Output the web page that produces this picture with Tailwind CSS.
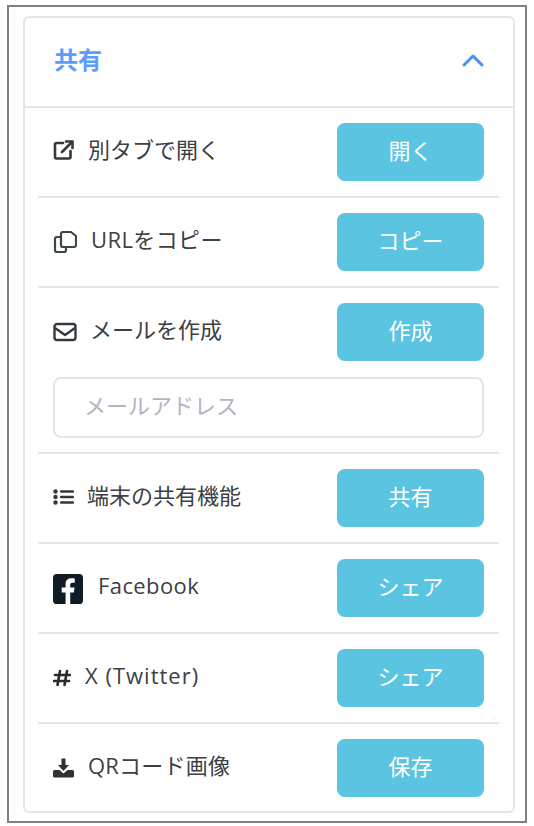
<!DOCTYPE html>
<html lang="ja">
  <head>
    <meta charset="UTF-8" />
    <title>共有</title>
    <script src="https://cdn.jsdelivr.net/npm/@tailwindcss/browser@4"></script>
  </head>
  <body class="bg-white font-['Open_Sans','Noto_Sans_CJK_JP',sans-serif] text-[#3c4043]">
    <div class="ml-[7px] mt-[5px] w-[520px] h-[818px] border-2 border-[#808080] pt-[9px] pl-[14px] pr-[10px]">
      <div class="w-[492px] h-[797px] rounded-[6px] border-2 border-[#e6e6e6]">
        <div class="h-[90px] flex items-center justify-between border-b-2 border-[#e6e6e6] pb-[4px] pl-[29px] pr-[28px]">
          <h2 class="text-[24px] leading-none font-bold text-[#5b9dff]">共有</h2>
          <svg class="w-[24px] h-[16px] text-[#4a90f0]" viewBox="0 0 24 16" fill="none" stroke="currentColor" stroke-width="3" stroke-linecap="round" stroke-linejoin="round"><path d="M3 13 L12 4 L21 13" /></svg>
        </div>

        <div class="pl-[13px] pr-[14px]">
          <!-- open in tab -->
          <div class="h-[90px] flex items-start justify-between pt-[15px] pr-[15px] border-b-2 border-[#e6e6e6]">
            <div class="flex items-center h-[52px] pl-[15px] text-[22px]">
              <svg class="w-[22px] h-[22px] mr-[13px] mt-[2px] text-[#33393d]" viewBox="0 0 22 22" fill="none" stroke="currentColor" stroke-width="2.6" stroke-linecap="round" stroke-linejoin="round"><path d="M10 4 H3.5 Q2 4 2 5.5 V18 Q2 19.5 3.5 19.5 H16 Q17.500 19.500 17.500 18 V12" /><path d="M9 13 L19 3" /><path d="M13 2.500 H19.500 V9" /></svg>
              <span>別タブで開く</span>
            </div>
            <button class="w-[147px] h-[58px] pb-[4px] rounded-[8px] bg-[#5bc4e0] text-white text-[22px]">開く</button>
          </div>

          <!-- copy url -->
          <div class="h-[90px] flex items-start justify-between pt-[15px] pr-[15px] border-b-2 border-[#e6e6e6]">
            <div class="flex items-center h-[52px] pl-[15px] text-[22px]">
              <svg class="w-[24px] h-[24px] mr-[14px] mt-[6px] text-[#3c4548]" viewBox="0 0 24 24" fill="none" stroke="currentColor" stroke-width="2.200" stroke-linejoin="round"><path d="M8 7 H4 Q2 7 2 9 V20 Q2 22 4 22 H11 Q13 22 13 20 V18" /><path d="M10 2 H18 L23 6 V15 Q23 17 21 17 H10 Q8 17 8 15 V4 Q8 2 10 2 Z" /></svg>
              <span class="tracking-[0.4px]">URLをコピー</span>
            </div>
            <button class="w-[147px] h-[58px] pb-[4px] rounded-[8px] bg-[#5bc4e0] text-white text-[22px]">コピー</button>
          </div>

          <!-- mail -->
          <div class="h-[166px] border-b-2 border-[#e6e6e6] pt-[15px]">
            <div class="flex items-start justify-between pr-[15px]">
              <div class="flex items-center h-[52px] pl-[15px] text-[22px]">
                <svg class="w-[24px] h-[20px] mr-[13px] mt-[5px] text-[#33393d]" viewBox="0 0 24 20" fill="none" stroke="currentColor" stroke-width="2.400" stroke-linejoin="round"><rect x="1.500" y="2" width="21" height="16" rx="2.500" /><path d="M2 6 L12 13 L22 6" /></svg>
                <span>メールを作成</span>
              </div>
              <button class="w-[147px] h-[58px] pb-[4px] rounded-[8px] bg-[#5bc4e0] text-white text-[22px]">作成</button>
            </div>
            <input class="block mt-[16px] ml-[15px] w-[431px] h-[61px] rounded-[8px] border-2 border-[#e4e4ea] pl-[29px] pb-[6px] text-[22px] placeholder:text-[#b4b4c0]" placeholder="メールアドレス" />
          </div>

          <!-- device share -->
          <div class="h-[90px] flex items-start justify-between pt-[15px] pr-[15px] border-b-2 border-[#e6e6e6]">
            <div class="flex items-center h-[52px] pl-[15px] text-[22px]">
              <svg class="w-[21px] h-[16px] mr-[13px] mt-[4px] text-[#33393d]" viewBox="0 0 21 16" fill="currentColor"><circle cx="2.500" cy="2.500" r="2.200" /><circle cx="2.500" cy="8" r="2.200" /><circle cx="2.500" cy="13.500" r="2.200" /><rect x="7" y="1.200" width="14" height="2.600" rx="1" /><rect x="7" y="6.700" width="14" height="2.600" rx="1" /><rect x="7" y="12.200" width="14" height="2.600" rx="1" /></svg>
              <span>端末の共有機能</span>
            </div>
            <button class="w-[147px] h-[58px] pb-[4px] rounded-[8px] bg-[#5bc4e0] text-white text-[22px]">共有</button>
          </div>

          <!-- facebook -->
          <div class="h-[90px] flex items-start justify-between pt-[15px] pr-[15px] border-b-2 border-[#e6e6e6]">
            <div class="flex items-center h-[52px] pl-[15px] text-[22px]">
              <svg class="w-[30px] h-[30px] mr-[15px] mt-[7px] text-[#0f1c24]" viewBox="0 0 31 31"><rect width="31" height="31" rx="4" fill="currentColor" /><path fill="#fff" d="M13 31 V19 H9 V14 H13 V10.500 C13 6.500 15.500 4.500 19 4.500 C20.600 4.500 22 4.700 22.500 4.800 V9 H20 C18.200 9 17.800 10 17.800 11.200 V14 H22.300 L21.500 19 H17.800 V31 Z" /></svg>
              <span class="tracking-[0.4px]">Facebook</span>
            </div>
            <button class="w-[147px] h-[58px] pb-[4px] rounded-[8px] bg-[#5bc4e0] text-white text-[22px]">シェア</button>
          </div>

          <!-- twitter -->
          <div class="h-[90px] flex items-start justify-between pt-[15px] pr-[15px] border-b-2 border-[#e6e6e6]">
            <div class="flex items-center h-[52px] pl-[15px] text-[22px]">
              <svg class="w-[18px] h-[18px] mr-[14px] mt-[6px] text-[#262c30]" viewBox="0 0 18 18" fill="none" stroke="currentColor" stroke-width="2.600" stroke-linecap="round"><path d="M7 2 L4.500 16" /><path d="M14 2 L11.500 16" /><path d="M2 6 H17" /><path d="M1 12 H16" /></svg>
              <span class="tracking-[1px]">X (Twitter)</span>
            </div>
            <button class="w-[147px] h-[58px] pb-[4px] rounded-[8px] bg-[#5bc4e0] text-white text-[22px]">シェア</button>
          </div>

          <!-- qr -->
          <div class="h-[90px] flex items-start justify-between pt-[15px] pr-[15px]">
            <div class="flex items-center h-[52px] pl-[15px] text-[22px]">
              <svg class="w-[21px] h-[20px] mr-[14px] mt-[6px] text-[#2c3236]" viewBox="0 0 21 20" fill="currentColor"><path d="M8.500 0.500 H12.500 V7 H16 L10.500 13 L5 7 H8.500 Z" /><path d="M1.500 12 H6.500 L10.500 15.500 L14.500 12 H19.500 Q21 12 21 13.500 V18 Q21 19.500 19.500 19.500 H1.500 Q0 19.500 0 18 V13.500 Q0 12 1.500 12 Z" /></svg>
              <span class="tracking-[0.2px]">QRコード画像</span>
            </div>
            <button class="w-[147px] h-[58px] pb-[4px] rounded-[8px] bg-[#5bc4e0] text-white text-[22px]">保存</button>
          </div>
        </div>
      </div>
    </div>
  </body>
</html>
